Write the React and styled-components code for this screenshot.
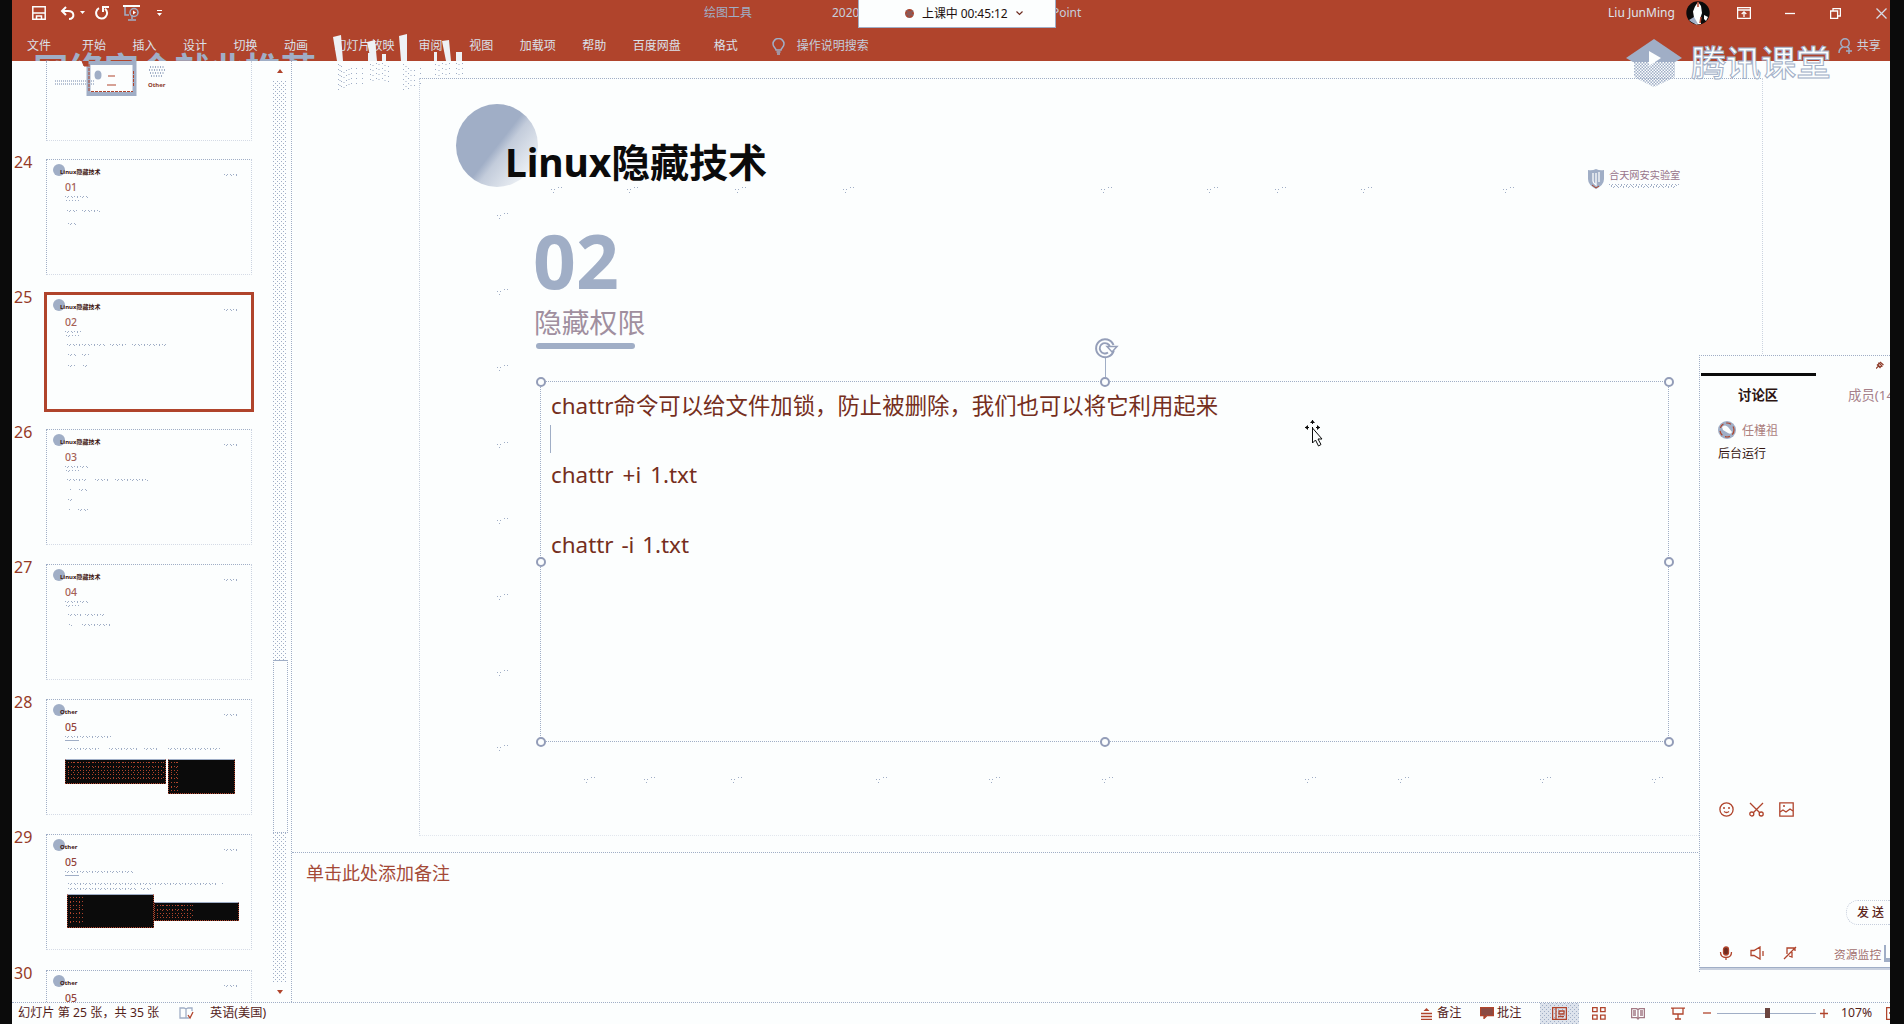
import React from "react";
import styled, { createGlobalStyle, css } from "styled-components";

const C = { bg: "#fcfefe", red: "#b0442c", blue: "#a0aec6", ink: "#0b0b0b", text: "#6e2c20" };
const dither = css`
  background-image: radial-gradient(circle at 0.5px 0.5px, ${C.blue} 0.6px, transparent 0.7px),
    radial-gradient(circle at 0.5px 0.5px, ${C.blue} 0.6px, transparent 0.7px);
  background-size: 4px 4px, 4px 4px;
  background-position: 0 0, 2px 2px;
`;

const Global = createGlobalStyle`
  * { box-sizing: border-box; }
  body { margin: 0; background: ${C.ink}; }
  svg { display: block; flex: none; }
`;
const Screen = styled.div`
  width: 1904px; height: 1024px; padding: 0 14px 0 12px; background: ${C.ink}; overflow: hidden;
  font-family: "Noto Sans", "Noto Sans CJK SC", sans-serif; color: ${C.text}; white-space: nowrap;
`;
const Window = styled.div`
  position: relative; height: 1024px; display: flex; flex-direction: column; background: ${C.bg}; overflow: hidden;
`;
const Header = styled.header`
  position: relative; height: 61px; flex: none; background: ${C.red}; overflow: hidden;
`;
const TitleRow = styled.div`display: flex; align-items: center; height: 26px; padding-left: 20px;`;
const TabRow = styled.nav`display: flex; align-items: center; height: 34px; padding-left: 15px; margin-top: 3px;`;
const Gap = styled.span`flex: none; width: ${(p) => p.$w}px;`;
const BarText = styled.span`
  flex: none; width: ${(p) => p.$w}px; font-size: 12px; line-height: 16px; color: ${(p) => p.$c || C.blue};
`;
const Tab = styled.span`
  flex: none; margin-right: ${(p) => p.$gap || 26.5}px; font-size: 12px; line-height: 16px; color: #dbe1ea;
`;
const Timer = styled.div`
  position: absolute; z-index: 3; left: 846px; top: 0; width: 198px; height: 28px; display: flex; align-items: center;
  padding: 0 31px 1px 46px; gap: 8px; background: ${C.bg}; border: solid ${C.blue}; border-width: 0 1px 1px;
  font-size: 12px; color: #21100d; letter-spacing: -0.1px;
`;
const RecDot = styled.i`width: 9px; height: 9px; flex: none; border-radius: 50%; background: #8b5a58; border: 2px dotted ${C.red};`;
const LeftMark = styled.div`
  position: absolute; left: 21px; top: 46px; font-size: 35.4px; line-height: 46px; color: ${C.blue}; font-weight: 600;
`;
const CourseMark = styled.div`
  position: absolute; z-index: 4; left: 1613px; top: 37px; height: 52px; display: flex; align-items: center; gap: 8px;
`;
const CourseName = styled.span`
  font-size: 35px; line-height: 50px; color: ${C.bg}; font-weight: 500; -webkit-text-stroke: 1px ${C.blue};
`;
const Clips = styled.svg`position: absolute; z-index: 4; left: 320px; top: 32px;`;

const Body = styled.main`display: flex; flex: none; height: 941px; overflow: hidden;`;
const Outline = styled.aside`width: 280px; flex: none; display: flex; border-right: 1px dotted ${C.blue};`;
const ThumbList = styled.div`width: 261px; flex: none; overflow: hidden; height: 941px;`;
const ThumbRow = styled.div`display: flex; height: 135.1px; &:first-child { height: 98px; }`;
const ThumbNo = styled.span`width: 34px; flex: none; padding-left: 2px; font-size: 16px; line-height: 16px; margin-top: -5px; color: #953a27;`;
const Thumb = styled.div`
  position: relative; width: 206px; height: ${(p) => p.$h || 116}px; padding: 4px 0 0 6px; border: 1px dotted ${C.blue};
  border-right-color: #cbd3e0; border-bottom-color: #d5dbe6;
  ${(p) => p.$open && css`border-top: none; padding: 0 0 0 7px;`}
  ${(p) => p.$on && css`outline: 3px solid ${C.red}; outline-offset: -1px; border-color: ${C.bg} ${C.blue} ${C.blue} ${C.bg};`}
`;
const ThumbHead = styled.div`display: flex; height: 14px; width: 185px;`;
const Ball = styled.i`width: 12px; height: 12px; flex: none; border-radius: 50%; background: ${C.blue};`;
const ThumbTitle = styled.b`margin: 4px 0 0 -5px; flex: 1; font-size: 6px; line-height: 9px; color: #3c1410;`;
const ThumbNum = styled.div`margin: 3px 0 0 12px; font-size: 10.5px; line-height: 12px; font-weight: 500; color: ${(p) => p.$c || "#a55f55"};`;
const Dots = styled.i`
  display: block; flex: none; width: ${(p) => p.$w}px; height: ${(p) => p.$h || 2}px; margin-left: ${(p) => p.$x || 0}px; margin-top: ${(p) => p.$t || 0}px;
  background-image: linear-gradient(90deg, ${C.blue} 50%, transparent 50%), linear-gradient(90deg, transparent 33%, ${C.blue} 33%, ${C.blue} 60%, transparent 60%);
  background-size: 3px 1px, 5px 1px; background-repeat: repeat-x; background-position: 0 0, 0 1px;
`;
const Line = styled.div`display: flex; height: 2px; margin-top: ${(p) => p.$t}px;`;
const Rule = styled.i`display: block; width: 14px; height: 1px; margin: 2px 0 0 12px; background: ${C.blue};`;
const Shots = styled.div`display: flex; margin: ${(p) => p.$t}px 0 0 ${(p) => p.$x}px; gap: ${(p) => p.$gap}px;`;
const Shot = styled.i`
  width: ${(p) => p.$w}px; height: ${(p) => p.$h}px; margin-top: ${(p) => p.$t || 0}px; background: ${C.ink};
  border: 1px dotted ${C.red}; border-top: 1px solid ${C.blue}; padding: 2px;
`;
const Log = styled.i`
  display: block; height: 100%; width: ${(p) => p.$w}px;
  background-image: radial-gradient(circle at 0.5px 0.5px, ${C.red} 0.6px, transparent 0.7px), radial-gradient(circle at 0.5px 0.5px, ${C.red} 0.6px, transparent 0.7px);
  background-size: 3px 4px, ${(p) => p.$k || 5}px 5px;
`;
const Scroll = styled.div`width: 14px; height: 941px; display: flex; flex-direction: column; align-items: center;`;
const ScrollEnd = styled.div`height: ${(p) => p.$h}px; width: 14px; display: flex; align-items: center; justify-content: center;`;
const Track = styled.div`width: 14px; height: ${(p) => p.$h}px; ${dither}`;
const Knob = styled.div`width: 15px; height: 173px; border: 1px dotted ${C.blue}; border-top-style: solid;`;

const Stage = styled.section`flex: 1; display: flex; flex-direction: column;`;
const Canvas = styled.div`position: relative; height: 792px; padding: 17px 0 0 127px; border-bottom: 1px dotted ${C.blue};`;
const Specks = styled.svg`position: absolute; left: 0; top: 0;`;
const Slide = styled.article`
  position: relative; width: 1344px; height: 758px; border: 1px dotted ${C.blue}; padding: 25px 0 0 36px;
  border-left-color: #c6cfdd; border-right-color: #ccd4e0; border-bottom-color: #e2e7ee;
`;
const SlideHead = styled.div`display: flex; height: 95px;`;
const BigBall = styled.i`
  width: 82px; height: 83px; flex: none; border-radius: 50%;
  background: linear-gradient(128deg, ${C.blue} 50%, #c3ccdb 58%, #e6ebf1 82%, ${C.bg} 100%);
`;
const SlideTitle = styled.h1`
  width: 1083px; flex: none; margin: 31px 0 0 -33px; font-size: 39px; line-height: 54px; font-weight: 700; color: ${C.ink}; letter-spacing: -0.1px;
`;
const Lab = styled.div`display: flex; gap: 5px; margin-top: 65px; height: 24px;`;
const LabText = styled.div`font-size: 10.2px; line-height: 12px; color: #98748a;`;
const Section = styled.div`margin-left: 78px;`;
const SectionNo = styled.div`height: 85px; font-size: 75px; line-height: 105px; font-weight: 700; color: ${C.blue}; margin-left: -1px; margin-top: 9px;`;
const SectionName = styled.div`font-size: 27.8px; line-height: 36px; color: #a08f9f; margin: 11px 0 0 0; height: 39px;`;
const Underline = styled.div`width: 99px; height: 6px; border-radius: 3px; background: ${C.blue}; margin: 0 0 0 2px;`;
const TextBox = styled.div`
  position: relative; width: 1129px; height: 361px; margin: 32px 0 0 6px; padding: 7px 0 0 10px; border: 1px dotted ${C.blue};
  font-size: 22.4px; line-height: 34.8px; color: #752e20; word-spacing: ${(p) => p.$ws}px;
`;
const Para = styled.div`height: 34.8px; margin-top: ${(p) => p.$t || 0}px; word-spacing: ${(p) => p.$ws || 0}px;`;
const Caret = styled.div`height: 28px; border-left: 1px solid ${C.blue}; margin-left: -1px;`;
const Grip = styled.i`
  position: absolute; left: ${(p) => p.$x}px; top: ${(p) => p.$y}px; width: 10px; height: 10px; margin: -5px;
  border: 2px solid #939db8; border-radius: 50%; background: ${C.bg};
`;
const Stem = styled.i`position: absolute; left: 564px; top: -25px; width: 1px; height: 20px; background: ${C.blue};`;
const Rotate = styled.svg`position: absolute; left: 552px; top: -46px;`;
const Pointer = styled.svg`position: absolute; left: 763px; top: 37px;`;
const Notes = styled.div`padding: 7px 0 0 14px; font-size: 18px; line-height: 26px; color: #a44a38;`;

const Status = styled.footer`
  height: 22px; flex: none; display: flex; align-items: center; padding-bottom: 1px; border-top: 1px dotted ${C.blue}; font-size: 12.2px; color: #54221a;
`;
const Words = styled.span`flex: none; width: ${(p) => p.$w}px; line-height: 18px;`;
const ViewOn = styled.span`flex: none; width: 39px; height: 21px; display: flex; align-items: center; justify-content: center; background-color: #dde3ec; ${dither}`;

const Chat = styled.aside`
  position: absolute; z-index: 5; left: 1687px; top: 355px; width: 191px; height: 617px; background: ${C.bg};
  border: 1px dotted ${C.blue}; border-right: none; border-bottom: none; padding-left: 1px; overflow: hidden;
`;
const ChatEdge = styled.div`height: 3px; margin: 4px 0 0 -1px; background: #c9d1df; border-top: 1px solid ${C.blue};`;
const PinRow = styled.div`height: 17px; display: flex; justify-content: flex-end; align-items: center; padding-right: 6px;`;
const ActiveBar = styled.div`width: 115px; height: 3px; background: ${C.ink};`;
const ChatTabs = styled.div`display: flex; height: 36px; align-items: center; padding-left: 37px; font-size: 13.4px;`;
const ChatTab = styled.span`flex: none; width: 110px; font-weight: ${(p) => (p.$on ? 700 : 400)}; color: ${(p) => (p.$on ? "#2c1512" : "#a6808a")};`;
const Sender = styled.div`display: flex; align-items: center; gap: 6px; padding-left: 17px; margin-top: 8px; height: 20px; font-size: 12px; color: #ac817f;`;
const Message = styled.div`padding: 5px 0 0 17px; font-size: 12px; line-height: 18px; color: #34150f; height: 361px;`;
const Tools = styled.div`display: flex; height: 16px; align-items: center; padding-left: 18px; gap: 15px;`;
const SendRow = styled.div`display: flex; justify-content: flex-end; margin-top: 83px;`;
const Send = styled.span`
  width: 44px; height: 25px; padding-left: 10px; font-size: 12px; line-height: 23px; letter-spacing: 3px; font-weight: 500; color: #5c251b;
  border: 1px dotted #c6cedc; border-right: none; border-radius: 12px 0 0 12px;
`;
const Bottom = styled.div`display: flex; align-items: center; height: 20px; margin-top: 18px; padding-left: 18px;`;
const Monitor = styled.span`margin-left: 37px; width: 50px; flex: none; font-size: 11.8px; color: #a2706f;`;
const Meter = styled.i`width: 6px; height: 17px; flex: none; border-left: 2px solid ${C.blue}; border-bottom: 4px solid ${C.blue};`;

const Icon = ({ w = 14, h = 14, box, c = C.red, sw = 1.3, children }) => (
  <svg width={w} height={h} viewBox={box || `0 0 ${w} ${h}`} fill="none" stroke={c} strokeWidth={sw}>{children}</svg>
);

const thumbs = [
  { n: 24, title: "Linux隐藏技术", num: "01", sub: 24, lines: [[9, [[14, 11], [4, 18]]], [11, [[15, 8]]]] },
  { n: 25, on: true, title: "Linux隐藏技术", num: "02", sub: 16, lines: [[8, [[14, 38], [5, 16], [6, 36]]], [8, [[15, 8], [6, 7]]], [9, [[15, 7], [8, 5]]]] },
  { n: 26, title: "Linux隐藏技术", num: "03", sub: 24, lines: [[8, [[14, 19], [9, 15], [5, 33]]], [8, [[17, 2], [7, 9]]], [8, [[15, 5]]], [8, [[16, 2], [7, 12]]]] },
  { n: 27, title: "Linux隐藏技术", num: "04", sub: 23, lines: [[8, [[15, 14], [3, 20]]], [8, [[16, 3], [10, 29]]]] },
  { n: 28, title: "Other", num: "05", sub: 47, rule: true, lines: [[7, [[15, 31], [10, 28], [7, 15], [9, 52]]]],
    shots: { t: 9, x: 12, gap: 2, items: [{ w: 101, h: 25, log: 96 }, { w: 67, h: 35, log: 8 }] } },
  { n: 29, title: "Other", num: "05", sub: 68, rule: true, lines: [[7, [[15, 148], [6, 2]]], [3, [[15, 68], [5, 10]]]],
    shots: { t: 4, x: 14, gap: 0, items: [{ w: 87, h: 34, log: 14, k: 9 }, { w: 85, h: 19, t: 8, log: 36 }] } },
  { n: 30, title: "Other", num: "05", h: 34, sub: 0, lines: [] },
];

const SlideThumb = ({ t }) => (
  <ThumbRow>
    <ThumbNo>{t.n}</ThumbNo>
    <Thumb $on={t.on} $h={t.h}>
      <ThumbHead><Ball /><ThumbTitle>{t.title}</ThumbTitle><Dots $w={14} $t={10} /></ThumbHead>
      <ThumbNum $c={t.n > 27 ? "#93443a" : undefined}>{t.num}</ThumbNum>
      {t.sub > 0 && <Dots $w={t.sub} $x={12} $t={3} $h={2} />}
      {t.rule ? <Rule /> : t.sub > 0 && <Dots $w={14} $x={13} $t={2} $h={1} />}
      {t.lines.map(([top, segs], i) => (
        <Line key={i} $t={top}>{segs.map(([x, w], j) => <Dots key={j} $x={x} $w={w} />)}</Line>
      ))}
      {t.shots && (
        <Shots $t={t.shots.t} $x={t.shots.x} $gap={t.shots.gap}>
          {t.shots.items.map((s, i) => <Shot key={i} $w={s.w} $h={s.h} $t={s.t}><Log $w={s.log} $k={s.k} /></Shot>)}
        </Shots>
      )}
    </Thumb>
  </ThumbRow>
);

const tabs = [["文件", 31], ["开始"], ["插入"], ["设计"], ["切换"], ["动画"], ["幻灯片放映", 24], ["审阅"], ["视图"], ["加载项"], ["帮助"], ["百度网盘", 33], ["格式", 34]];
const grips = [[0, 0], [564, 0], [1128, 0], [0, 180], [1128, 180], [0, 360], [564, 360], [1128, 360]];
const specks = [
  ...[584, 644, 731, 876, 989, 1102, 1305, 1398, 1540, 1652].map((x) => [x, 779]),
  ...[551, 627, 735, 843, 1101, 1207, 1275, 1361, 1503].map((x) => [x, 189]),
  ...[215, 291, 367, 444, 520, 596, 672, 747].map((y) => [497, y]),
];

function TopBar() {
  return (
    <Header>
      <TitleRow>
        <Icon w={14} h={14} c={C.bg} sw={1.5}><path d="M.8.8h12.4v12.4H.8zM.8 7h12.4M4.5 13v-3h5v3" /></Icon>
        <Gap $w={14} />
        <Icon w={15} h={14} c={C.bg} sw={2}><path d="M6 1L2 5l4 4M2 5h6c7 0 7 8 1 8" /></Icon>
        <Gap $w={5} />
        <Icon w={6} h={4}><path d="M0 0h5L2.500 3z" fill={C.bg} stroke="none" /></Icon>
        <Gap $w={9} />
        <Icon w={14} h={14} c={C.bg} sw={2}><path d="M4 2.200a5.500 5.500 0 1 0 6 .5M8 6V1h6" /></Icon>
        <Gap $w={14} />
        <Icon w={17} h={16} c={C.blue} sw={1.5}><path d="M0 1h17" stroke={C.bg} strokeWidth="2" /><path d="M2 2v8h4M9 10v4M5 15h8" /><circle cx="11" cy="7.500" r="4" /><path d="M10 5.500v4l3-2z" fill={C.bg} stroke="none" /></Icon>
        <Gap $w={17} />
        <Icon w={6} h={7}><path d="M0 0h5v1H0zM0 3h5L2.500 6z" fill={C.bg} stroke="none" /></Icon>
        <Gap $w={541} />
        <BarText $w={128}>绘图工具</BarText>
        <BarText $w={220} $c="#c7cedb">2020</BarText>
        <BarText $w={556} $c="#c7cedb">Point</BarText>
        <BarText $w={78} $c="#dfe4ed">Liu JunMing</BarText>
        <svg width="24" height="24" viewBox="0 0 24 24"><circle cx="12" cy="12" r="11.700" fill={C.ink} /><path d="M12 1l3 4 1 7-2 6 1 5-5 .500-5-4 3-3-1-6 2-5z" fill={C.bg} /><path d="M3 19l5-3 4 7q-5 0-9-4z" fill={C.blue} /><path d="M18 14l4 2-2 4-2-2z" fill={C.bg} /><path d="M12 1v5M15 16l-1 6" stroke={C.red} strokeWidth="1.500" /></svg>
        <Gap $w={27} />
        <Icon w={14} h={12} c={C.bg}><path d="M.6.6h12.800v10.800H.6zM.6 3h12.800M7 10V5M4.700 7L7 4.800 9.300 7" /></Icon>
        <Gap $w={34} />
        <Icon w={10} h={12} c={C.bg}><path d="M0 6.500h10" /></Icon>
        <Gap $w={35} />
        <Icon w={11} h={11} c={C.bg}><path d="M.6 3h7v7.400h-7zM3 3V.6h7.400V8H8" /></Icon>
        <Gap $w={35} />
        <Icon w={11} h={11} c="#d6dce7"><path d="M.5.5l10 10M10.500.5l-10 10" /></Icon>
      </TitleRow>
      <TabRow>
        {tabs.map(([t, g]) => <Tab key={t} $gap={g}>{t}</Tab>)}
        <Icon w={13} h={17} c={C.blue} sw={1.5}><path d="M4 12c0-2-3-3-3-6a5.400 5.400 0 0 1 11 0c0 3-3 4-3 6zM4.500 14h4M5 16h3" /></Icon>
        <Gap $w={12} />
        <BarText $w={1041} $c="#c5cddb">操作说明搜索</BarText>
        <Icon w={14} h={16} c={C.blue} sw={1.5}><circle cx="7" cy="5" r="4.200" /><path d="M1 15c0-3 1-5 4-6M9 9l2 1M11 10v6M8 13h6" /></Icon>
        <Gap $w={5} />
        <BarText $w={26} $c="#cbd2df">共享</BarText>
      </TabRow>
      <LeftMark>网络安全就业推荐</LeftMark>
    </Header>
  );
}

function SlideList() {
  return (
    <Outline>
      <ThumbList>
        <ThumbRow>
          <ThumbNo />
          <Thumb $open $h={80}>
            <svg width="120" height="36" viewBox="0 0 120 36">
              <path d="M1 20h40M1 23h40" stroke={C.blue} strokeWidth="1.500" strokeDasharray="1 1" />
              <path d="M33 2h49M34.500 0v33h46V0" stroke={C.blue} strokeWidth="4" fill="none" />
              <path d="M37 30.500h42M35 3v27M79.500 10v16" stroke={C.red} strokeDasharray="3 1" />
              <path d="M28 0h6v5h-4zM54 15h7M53 24h9" stroke={C.red} fill={C.red} strokeWidth="1" />
              <ellipse cx="44" cy="14" rx="3.500" ry="4.500" fill={C.blue} />
              <path d="M96 6h14M95 9h16M96 12h14M97 15h12" stroke={C.blue} strokeWidth="2" strokeDasharray="1 1.500" />
              <text x="94" y="26" fontSize="6" fontWeight="700" fill="#8d3a2b">Other</text>
            </svg>
          </Thumb>
        </ThumbRow>
        {thumbs.map((t) => <SlideThumb key={t.n} t={t} />)}
      </ThumbList>
      <Scroll>
        <ScrollEnd $h={20}><Icon w={6} h={4}><path d="M0 4l3-4 3 4z" fill={C.red} stroke="none" /></Icon></ScrollEnd>
        <Track $h={579} />
        <Knob />
        <Track $h={150} />
        <ScrollEnd $h={18}><Icon w={6} h={4}><path d="M0 0h6L3 4z" fill={C.red} stroke="none" /></Icon></ScrollEnd>
      </Scroll>
    </Outline>
  );
}

function SlideView() {
  return (
    <Slide>
      <SlideHead>
        <BigBall />
        <SlideTitle>Linux隐藏技术</SlideTitle>
        <Lab>
          <svg width="16" height="20" viewBox="0 0 16 20"><path d="M0 1q4 1 8-1 4 2 8 1v9q0 6-8 10-8-4-8-10z" fill={C.blue} /><path d="M5 4v8q0 2 3 4V4M11 3v10" stroke={C.bg} fill="none" strokeWidth="1.300" /><path d="M4 16l4 3 3-2" stroke={C.red} fill="none" /></svg>
          <LabText>合天网安实验室<Dots $w={70} $t={3} /><Dots $w={66} $x={2} /></LabText>
        </Lab>
      </SlideHead>
      <Section>
        <SectionNo>02</SectionNo>
        <SectionName>隐藏权限</SectionName>
        <Underline />
        <TextBox>
          <Para>chattr命令可以给文件加锁，防止被删除，我们也可以将它利用起来</Para>
          <Para $t={1}><Caret /></Para>
          <Para $t={-2} $ws={3.2}>chattr +i 1.txt</Para>
          <Para $t={35.3} $ws={2}>chattr -i 1.txt</Para>
          <Stem />
          {grips.map(([x, y]) => <Grip key={`${x}-${y}`} $x={x} $y={y} />)}
          <Rotate width="26" height="24" viewBox="0 0 26 24" fill="none" stroke="#959fb9" strokeWidth="2"><path d="M20.500 9a9 9 0 1 0 .3 5.500" /><path d="M15 16.500a5.200 5.200 0 1 1 2-5.500" strokeWidth="1.800" /><path d="M14 10.500h10l-5 5.500z" fill={C.bg} strokeWidth="1.500" /></Rotate>
          <Pointer width="20" height="28" viewBox="0 0 20 28" fill="none" stroke={C.ink}>
            <path d="M8.500 1v4M1 8.500h4M12 8.500h4M8.500 8v5" />
            <path d="M6 4l2.500-3L11 4zM4 6L1 8.500 4 11zM13 6l3 2.500-3 2.500z" fill={C.ink} stroke="none" />
            <path d="M8.500 9v15l3-3 3 6 2.500-1.500-3-5.500h4z" fill={C.bg} />
          </Pointer>
        </TextBox>
      </Section>
    </Slide>
  );
}

function ChatPanel() {
  return (
    <Chat>
      <PinRow><Icon w={8} h={8} sw={1.2} c="#8e3c2a"><path d="M3 2l3 3-2 1-2-2zM1 3.500l3.500 3.500M4 1l3.500 3M0 7.500L2.500 5" /></Icon></PinRow>
      <ActiveBar />
      <ChatTabs><ChatTab $on>讨论区</ChatTab><ChatTab>成员(14</ChatTab></ChatTabs>
      <Sender>
        <svg width="18" height="18" viewBox="0 0 18 18"><circle cx="9" cy="9" r="9" fill={C.blue} /><circle cx="9" cy="9" r="7" fill="none" stroke={C.red} strokeWidth="1.200" strokeDasharray="5 3" /><path d="M4 6q3-3 6 0l4 5q-1 3-4 1L5 9z" fill={C.bg} /></svg>
        任槿祖
      </Sender>
      <Message>后台运行</Message>
      <Tools>
        <Icon w={15} h={15}><circle cx="7.500" cy="7.500" r="6.600" /><path d="M4 6h2M9 6h2M5 9.500q2.500 2 5 0" /></Icon>
        <Icon w={15} h={15}><path d="M1 1l10 10M14 1L4 11" /><circle cx="2.800" cy="12" r="2" /><circle cx="12.200" cy="12" r="2" /></Icon>
        <Icon w={15} h={15}><path d="M.8.8h13.400v13.400H.8zM1 10l3-2 3 2 4-3 3 2M4 4h2" /></Icon>
      </Tools>
      <SendRow><Send>发送</Send></SendRow>
      <Bottom>
        <Icon w={14} h={14}><rect x="4.500" y="1" width="5" height="8" rx="2.500" fill={C.text} /><path d="M1.500 6q0 5.500 5.500 5.500T12.500 6M7 11.500V14" /></Icon>
        <Gap $w={17} />
        <Icon w={14} h={14}><path d="M1 4.500v5h3l6 3.500V1L4 4.500zM13 5v5" /></Icon>
        <Gap $w={19} />
        <Icon w={14} h={14}><path d="M4 8V2h8M9 6v5l-3-1M1 13L13 1M12 2v3" /></Icon>
        <Monitor>资源监控</Monitor>
        <Meter />
      </Bottom>
      <ChatEdge />
    </Chat>
  );
}

function StatusBar() {
  return (
    <Status>
      <Gap $w={6} />
      <Words $w={161}>幻灯片 第 25 张，共 35 张</Words>
      <Icon w={15} h={13} c={C.blue}><path d="M1 1h4l2 1v9H1zM7 2l2-1h4v3M7 11h3" /><path d="M9 8l2 3 3-6" stroke={C.red} /></Icon>
      <Gap $w={16} />
      <Words $w={1211}>英语(美国)</Words>
      <Icon w={11} h={13}><path d="M2.500 4L5.500 1l3 3z" fill={C.red} stroke="none" /><path d="M0 6.500h11M0 9.500h11M0 12.400h11" /></Icon>
      <Gap $w={5} />
      <Words $w={43}>备注</Words>
      <Icon w={14} h={12}><path d="M.6.6h12.800v8H7L4 11.500V8.600H.6z" fill="#8a4a42" /></Icon>
      <Gap $w={3} />
      <Words $w={43}>批注</Words>
      <ViewOn><Icon w={15} h={13}><path d="M.6.6h13.800v11.800H.6zM4 1v11M7 4h5v3H7zM6 9.500h6" /></Icon></ViewOn>
      <Gap $w={13} />
      <Icon w={14} h={13}><path d="M.6.6h4.500v4H.6zM8.600.6h4.500v4H8.600zM.6 8.200h4.500v4H.6zM8.600 8.200h4.500v4H8.600z" /></Icon>
      <Gap $w={25} />
      <Icon w={14} h={13} c="#a37a85"><path d="M.6 1.600h5l1.400 1 1.400-1h5v9h-5L7 12l-1.400-1.400h-5zM7 2v10M2 4h3M2 6h3M2 8h3M9 4h3M9 6h3M9 8h3" /></Icon>
      <Gap $w={26} />
      <Icon w={14} h={13}><path d="M0 1.200h14M2 1.500v5.500h10V1.500M7 7v5M4 12h6" /></Icon>
      <Gap $w={18} />
      <Icon w={9} h={9}><path d="M0 4h8" /></Icon>
      <Gap $w={5} />
      <svg width="99" height="12"><path d="M0 6.500h99" stroke={C.blue} /><rect x="48" y="1" width="5" height="10" fill="#6b453f" /></svg>
      <Gap $w={4} />
      <Icon w={9} h={9}><path d="M0 4.500h8M4 0v9" /></Icon>
      <Gap $w={12} />
      <Words $w={45}>107%</Words>
      <Icon w={14} h={13}><path d="M.6.6h12v11.800H.6zM3 6h4" /></Icon>
    </Status>
  );
}

export default function App() {
  return (
    <>
      <Global />
      <Screen>
        <Window>
          <TopBar />
          <Body>
            <SlideList />
            <Stage>
              <Canvas>
                <SlideView />
                <Specks width="1400" height="790" viewBox="292 61 1400 790" fill="none" stroke={C.blue}>
                  {specks.map(([x, y]) => <path key={`${x}-${y}`} d={`M${x} ${y + 0.5}h1m2 0h1m3-2h1m2 0h1m-9 5h1`} />)}
                </Specks>
              </Canvas>
              <Notes>单击此处添加备注</Notes>
            </Stage>
          </Body>
          <StatusBar />
          <Timer><RecDot />上课中 00:45:12
            <Icon w={7} h={5} c={C.text} sw={1.2}><path d="M.5.5l3 3 3-3" /></Icon>
          </Timer>
          <Clips width="134" height="62" viewBox="0 0 134 62">
            <path d="M1 5l8-2 2 26H5zM35 10l8-2 2 21h-6zM67 4l8-2v27h-6zM110 9l7-1 2 21h-5zM36 21h3v8h-3zM50 22h4v7h-4zM102 20h3v9h-3zM124 20h6v9h-6z" fill="#eef1f5" />
            <g fill="none" stroke={C.blue} strokeDasharray="1 4" strokeWidth="1"><path d="M6.500 32v26M9.500 34v24M14.500 38v20M19.500 36v20M24.500 36v18M30.500 36v16M38.500 32v18M44.500 31v19M50.500 31v18M56.500 34v16M71.500 32v26M76.500 36v22M82.500 38v16M88.500 36v18M103.500 32v12M110.500 31v14M117.500 31v14M124.500 31v13M130.500 31v16" /><path d="M8 33v24M12 40v16M17 37v20M41 33v16M47 32v18M53 33v16M74 34v22M79 38v18M107 33v12M114 32v12M127 32v14" /></g>
          </Clips>
          <CourseMark>
            <svg width="58" height="50" viewBox="0 0 58 50">
              <defs><pattern id="mesh" width="3" height="3" patternUnits="userSpaceOnUse"><path d="M0 0h1.500v1.500H0zM1.500 1.500H3V3H1.500z" fill={C.blue} /></pattern></defs>
              <path d="M29 1l28 19-7 4H8l-7-4z" fill={C.blue} /><path d="M9 24h41v15L29 49 9 39z" fill="url(#mesh)" /><path d="M24 13l12 7-12 8z" fill={C.bg} />
            </svg>
            <CourseName>腾讯课堂</CourseName>
          </CourseMark>
          <ChatPanel />
        </Window>
      </Screen>
    </>
  );
}
